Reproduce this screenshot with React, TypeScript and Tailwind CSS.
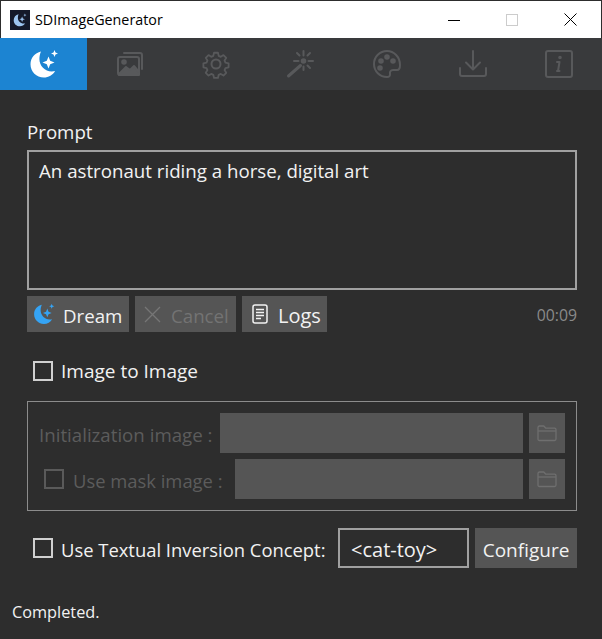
import type { ReactNode } from 'react';

// Icons
const MoonStars = ({ color, size }: { color: string; size: number }) => (
  <svg width={size} height={size} viewBox="0 0 30 30" fill={color}>
    <path d="M12 2.500C5.800 3.800 1.500 9 1.500 15.300 1.500 22.700 7.500 28.500 14.800 28.500c4.800 0 9-2.500 11.300-6.500-1 .3-2.100.4-3.300.4-6.900 0-12.400-5.500-12.400-12.400 0-2.800.7-5.500 1.600-7.500z" />
    <path d="M19.500 7.500l1.700 4.300 4.300 1.700-4.300 1.700-1.700 4.300-1.700-4.300-4.300-1.700 4.300-1.700z" />
    <path d="M25.500 1l1 2.500 2.500 1-2.500 1-1 2.500-1-2.500-2.500-1 2.500-1z" />
  </svg>
);

const TabIcon = ({ children }: { children: ReactNode }) => (
  <svg width="30" height="30" viewBox="0 0 30 30" fill="none" stroke="#58595b" strokeWidth="2" strokeLinecap="round" strokeLinejoin="round">
    {children}
  </svg>
);

const FolderIcon = () => (
  <svg width="20" height="18" viewBox="0 0 20 18" fill="none" stroke="#6f6f6f" strokeWidth="1.300" strokeLinejoin="round">
    <path d="M1 15V3.500C1 2.500 1.600 2 2.500 2h4.300l2 2.200h8.700c.9 0 1.500.6 1.500 1.500V15c0 1-.6 1.500-1.500 1.500h-15C1.600 16.500 1 16 1 15z" />
    <path d="M1 7h18" />
  </svg>
);

const tabs: ReactNode[] = [
  <>
    <path d="M9 4h16a2 2 0 0 1 2 2v14" />
    <rect x="3" y="8" width="21" height="18" rx="2" />
    <circle cx="9" cy="13" r="1.800" fill="#58595b" />
    <path d="M4 25l7-7 4 3 4-4 5 6v3H4z" fill="#58595b" />
  </>,
  <>
    <circle cx="15" cy="15" r="4.500" />
    <path d="M12.800 2.500h4.400l.8 3.500 2.300 1 3-1.900 3.100 3.100-1.900 3 1 2.300 3.500.8v4.400l-3.500.8-1 2.300 1.900 3-3.100 3.100-3-1.900-2.300 1-.8 3.500h-4.400l-.8-3.500-2.300-1-3 1.900-3.100-3.100 1.900-3-1-2.300-3.500-.8v-4.400l3.500-.8 1-2.300-1.900-3 3.100-3.100 3 1.900 2.300-1z" transform="translate(1.500 1.500) scale(.9)" />
  </>,
  <>
    <path d="M2.500 27L14.500 16.500" strokeWidth="3" />
    <path d="M17.500 2v4.500M17.500 17.500V21M8 12h4.500M22.500 12H27M11 4l2.500 2.500M24 4l-2.500 2.500M24 19l-2.500-2.500" />
    <circle cx="17.500" cy="12" r="1.800" fill="#58595b" />
  </>,
  <>
    <path d="M15 2C7.800 2 2 7.800 2 15s5.800 13 13 13c2.300 0 3.300-1.500 3-3-.4-2 .5-4 3-4h4c2.500 0 3-2 3-5C28 8 22 2 15 2z" />
    <circle cx="9" cy="12" r="1.800" fill="#58595b" />
    <circle cx="15" cy="8" r="1.800" fill="#58595b" />
    <circle cx="21" cy="12" r="1.800" fill="#58595b" />
    <circle cx="8" cy="19" r="1.800" fill="#58595b" />
  </>,
  <>
    <path d="M15 2v18M8 13.500l7 7 7-7" />
    <path d="M2 19v6a2 2 0 0 0 2 2h22a2 2 0 0 0 2-2v-6" />
  </>,
  <>
    <rect x="2" y="2" width="26" height="26" rx="2" />
    <path d="M15.500 13l-1.500 9M13 13h2.500M13 22h2.500" />
    <circle cx="16" cy="8.500" r=".8" fill="#58595b" />
  </>,
];

// Small pieces
const Checkbox = ({ disabled }: { disabled?: boolean }) => (
  <span className={`block w-[20px] h-[20px] border-2 ${disabled ? 'border-[#5a5a5a]' : 'border-[#d0d0d0]'}`} />
);

const FolderButton = () => (
  <div className="w-[36px] h-[40px] ml-[6px] bg-[#555555] flex items-center justify-center">
    <FolderIcon />
  </div>
);

const Button = ({ children, className }: { children: ReactNode; className: string }) => (
  <div className={`h-[36px] bg-[#555555] flex items-center ${className}`}>{children}</div>
);

const App = () => {
  return (
    <div
      className="w-[602px] h-[639px] overflow-hidden flex flex-col bg-[#2d2d2d] text-[#f2f2f2] border-t border-[#2d2d2d] text-[18.700px] leading-[24px]"
      style={{ fontFamily: '"Open Sans", sans-serif' }}
    >
      {/* Title bar */}
      <header className="h-[37px] mx-px bg-white flex items-center text-black">
        <div className="w-[20px] h-[20px] ml-[9px] bg-[#14192a] flex items-center justify-center">
          <MoonStars color="#9cc4ef" size={14} />
        </div>
        <span className="ml-[5px] text-[14.300px]">SDImageGenerator</span>
        <div className="ml-auto flex items-center">
          <svg width="12" height="12" viewBox="0 0 12 12" stroke="#000" fill="none" className="mr-[46px]">
            <path d="M0 6.500h12" />
          </svg>
          <svg width="12" height="12" viewBox="0 0 12 12" stroke="#cccccc" fill="none" className="mr-[46px]">
            <rect x=".5" y=".5" width="11" height="11" />
          </svg>
          <svg width="13" height="13" viewBox="0 0 13 13" stroke="#000" fill="none" className="mr-[24px]">
            <path d="M.5.500l12 12M12.500.500l-12 12" />
          </svg>
        </div>
      </header>

      {/* Tabs */}
      <nav className="h-[52px] bg-[#393a3c] flex">
        <div className="w-[87px] bg-[#1c84d2] flex items-center justify-center">
          <MoonStars color="#ffffff" size={30} />
        </div>
        {tabs.map((icon, index) => (
          <div key={index} className="w-[85.800px] flex items-center justify-center">
            <TabIcon>{icon}</TabIcon>
          </div>
        ))}
      </nav>

      {/* Content */}
      <main className="flex-1 flex flex-col pl-[27px] pr-[25px]">
        <label className="mt-[30px] h-[24px] block">Prompt</label>
        <div className="mt-[6px] h-[140px] border-2 border-[#a0a0a0] pl-[10px] pt-[7px]">
          An astronaut riding a horse, digital art
        </div>

        <div className="mt-[6px] flex items-center gap-[6px]">
          <Button className="w-[102px] pl-[6px]">
            <MoonStars color="#35a4f5" size={22} />
            <span className="ml-[8px] pt-[3px]">Dream</span>
          </Button>
          <Button className="w-[101px] pl-[9px] text-[#737373]">
            <svg width="17" height="17" viewBox="0 0 17 17" stroke="#767676" strokeWidth="1.300" fill="none">
              <path d="M1 1l15 15M16 1L1 16" />
            </svg>
            <span className="ml-[10px] pt-[3px]">Cancel</span>
          </Button>
          <Button className="w-[85px] pl-[10px]">
            <svg width="16" height="20" viewBox="0 0 16 20" fill="none" stroke="#f2f2f2" strokeWidth="1.500">
              <rect x="1" y="1" width="14" height="18" rx="2" />
              <path d="M4 5.500h8M4 8.500h8M4 11.500h8M4 14.500h5" />
            </svg>
            <span className="ml-[10px] pt-[3px] text-[20px]">Logs</span>
          </Button>
          <span className="ml-auto text-[15.800px] text-[#8a8a8a] pt-[2px]">00:09</span>
        </div>

        <div className="mt-[27px] ml-[6px] flex items-center">
          <Checkbox />
          <span className="ml-[8px] text-[19px]">Image to Image</span>
        </div>

        {/* Disabled group */}
        <fieldset className="mt-[18px] h-[110px] border border-[#8c8c8c] px-[11px] pt-[11px] text-[#5c5c5c]">
          <div className="flex h-[40px] items-center">
            <span className="whitespace-nowrap w-[181px] pt-[3px]">Initialization image :</span>
            <div className="flex-1 h-[40px] bg-[#555555]" />
            <FolderButton />
          </div>
          <div className="flex h-[40px] items-center mt-[6px]">
            <span className="ml-[5px]">
              <Checkbox disabled />
            </span>
            <span className="ml-[8px] w-[163px] whitespace-nowrap pl-[1px] pt-[3px] text-[18.400px]">Use mask image :</span>
            <div className="flex-1 h-[40px] bg-[#555555]" />
            <FolderButton />
          </div>
        </fieldset>

        <div className="mt-[17px] flex items-center">
          <span className="ml-[6px]">
            <Checkbox />
          </span>
          <span className="ml-[8px] w-[277px] whitespace-nowrap pt-[3px] text-[18.400px]">Use Textual Inversion Concept:</span>
          <div className="w-[131px] h-[40px] border-2 border-[#a0a0a0] pl-[11px] pt-[3px] flex items-center text-[20px]">
            &lt;cat-toy&gt;
          </div>
          <div className="w-[102px] h-[40px] ml-[6px] pt-[3px] bg-[#555555] flex items-center justify-center text-[19px]">
            Configure
          </div>
        </div>
      </main>

      {/* Status */}
      <footer className="pl-[12px] pb-[17px] text-[16.300px] leading-[20px]">Completed.</footer>
    </div>
  );
};

export default App;
